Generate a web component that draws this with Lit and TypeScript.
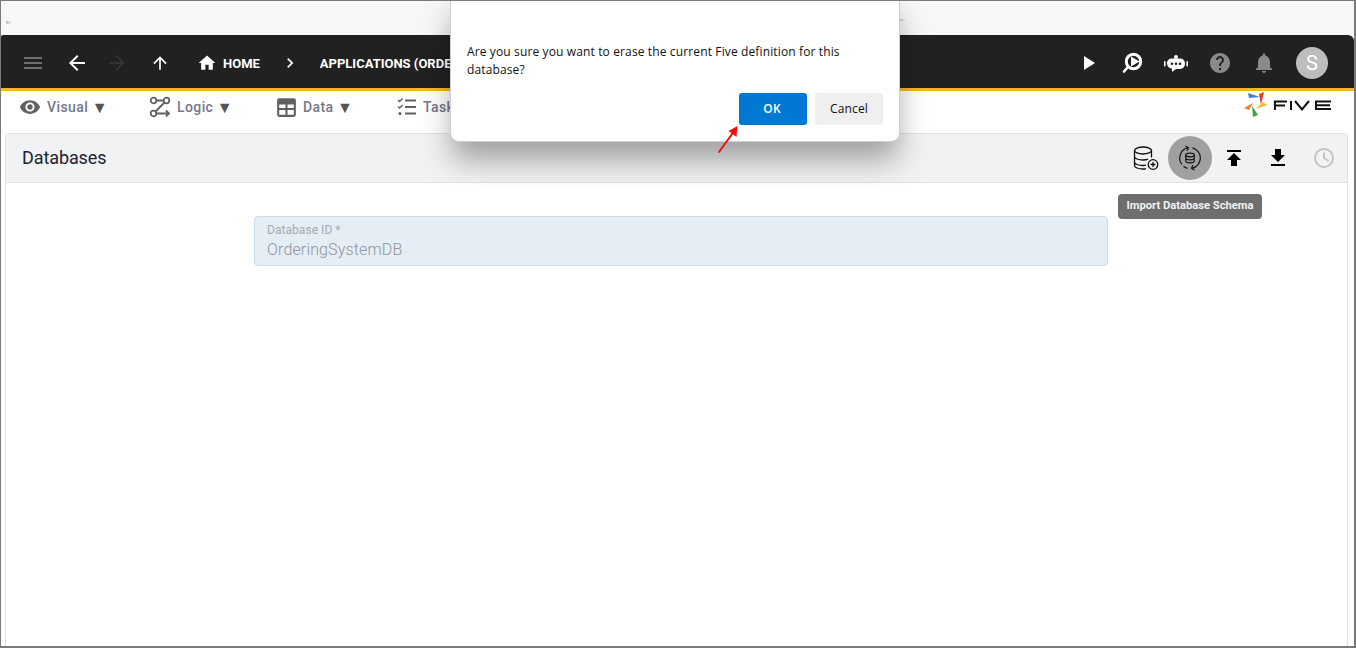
import { LitElement, html, css } from "lit";
import { customElement } from "lit/decorators.js";

const icon = (d: string, size = 24, cls = "") =>
  html`<svg class=${cls} width=${size} height=${size} viewBox="0 0 24 24" fill="currentColor"><path d=${d}></path></svg>`;

const P = {
  menu: "M3 18h18v-2H3v2zm0-5h18v-2H3v2zm0-7v2h18V6H3z",
  back: "M20 11H7.83l5.59-5.59L12 4l-8 8 8 8 1.41-1.41L7.83 13H20v-2z",
  fwd: "M12 4l-1.41 1.41L16.17 11H4v2h12.17l-5.58 5.59L12 20l8-8z",
  up: "M4 12l1.41 1.41L11 7.83V20h2V7.83l5.58 5.59L20 12l-8-8-8 8z",
  home: "M10 20v-6h4v6h5v-8h3L12 3 2 12h3v8z",
  chev: "M10 6L8.59 7.41 13.17 12l-4.58 4.59L10 18l6-6z",
  play: "M8 5v14l11-7z",
  help: "M12 2C6.48 2 2 6.48 2 12s4.48 10 10 10 10-4.48 10-10S17.52 2 12 2zm1 17h-2v-2h2v2zm2.07-7.75l-.9.92C13.45 12.9 13 13.5 13 15h-2v-.5c0-1.1.45-2.1 1.17-2.83l1.24-1.26c.37-.36.59-.86.59-1.41 0-1.1-.9-2-2-2s-2 .9-2 2H8c0-2.21 1.79-4 4-4s4 1.79 4 4c0 .88-.36 1.68-.93 2.25z",
  bell: "M12 22c1.1 0 2-.9 2-2h-4c0 1.1.9 2 2 2zm6-6v-5c0-3.07-1.63-5.64-4.5-6.32V4c0-.83-.67-1.5-1.5-1.5s-1.5.67-1.5 1.5v.68C7.64 5.36 6 7.92 6 11v5l-2 2v1h16v-1l-2-2z",
  eye: "M12 4.5C7 4.5 2.73 7.61 1 12c1.73 4.39 6 7.5 11 7.5s9.27-3.11 11-7.5c-1.73-4.39-6-7.5-11-7.5zM12 17c-2.76 0-5-2.24-5-5s2.24-5 5-5 5 2.24 5 5-2.24 5-5 5zm0-8c-1.66 0-3 1.34-3 3s1.34 3 3 3 3-1.34 3-3-1.34-3-3-3z",
  table: "M5 3h14a2 2 0 0 1 2 2v14a2 2 0 0 1-2 2H5a2 2 0 0 1-2-2V5a2 2 0 0 1 2-2zm0 6v3.5h6V9H5zm8 0v3.5h6V9h-6zm-8 5.5V19h6v-4.5H5zm8 0V19h6v-4.5h-6z",
  upload: "M5 4v2h14V4H5zm0 10h4v6h6v-6h4l-7-7-7 7z",
  download: "M19 9h-4V3H9v6H5l7 7 7-7zM5 18v2h14v-2H5z",
};

@customElement("app-root")
export class AppRoot extends LitElement {
  static styles = css`
    :host {
      display: flex;
      flex-direction: column;
      position: relative;
      box-sizing: border-box;
      height: 648px;
      border: 1px solid #7a7a7a;
      border-width: 1px 2px 2px 1px;
      background: #fff;
      font-family: Roboto, sans-serif;
      overflow: hidden;
    }
    .strip {
      height: 34px;
      flex: none;
      background: #f7f7f7;
      position: relative;
    }
    .speck {
      position: absolute;
      left: 5px;
      top: 20px;
      width: 5px;
      height: 3px;
      background: linear-gradient(90deg, #bbb, #eee);
    }
    .speck.r {
      left: 898px;
      top: 18px;
      width: 6px;
      height: 2px;
    }
    .bar {
      height: 53px;
      flex: none;
      box-sizing: content-box;
      background: #212121;
      border-bottom: 3px solid #f9b522;
      border-radius: 2px 6px 0 0;
      display: flex;
      align-items: center;
      color: #fff;
      padding: 0 0 0 20px;
    }
    .bar > * {
      position: relative;
      top: 1.5px;
    }
    .bar svg {
      display: block;
      flex: none;
    }
    .menu {
      color: #6f6f6f;
    }
    .ml-back {
      margin-left: 20px;
    }
    .ml-fwd {
      margin-left: 16px;
      color: #333;
    }
    .ml-up {
      margin-left: 21px;
    }
    .ml-home {
      margin-left: 27px;
    }
    .crumb {
      font-size: 13px;
      font-weight: 700;
      white-space: nowrap;
    }
    .home {
      margin-left: 6px;
    }
    .ml-chev {
      margin-left: 20px;
    }
    .apps {
      margin-left: 20px;
      width: 130px;
      overflow: hidden;
      flex: none;
    }
    .spacer {
      flex: 1;
    }
    .right {
      display: flex;
      align-items: center;
      gap: 20px;
      margin-right: 26px;
    }
    .dim {
      color: #8a8a8a;
    }
    .avatar {
      width: 32px;
      height: 32px;
      border-radius: 50%;
      background: #bdbdbd;
      color: #fff;
      display: flex;
      align-items: center;
      justify-content: center;
      font-size: 20px;
    }
    .tabs {
      height: 42px;
      flex: none;
      display: flex;
      align-items: flex-start;
      position: relative;
      padding-left: 18px;
      color: #616161;
    }
    .tab {
      display: flex;
      align-items: center;
      height: 32px;
      font-size: 14px;
      letter-spacing: 0.4px;
      font-weight: 500;
      flex: none;
      white-space: nowrap;
      overflow: hidden;
    }
    .tab svg {
      margin-right: 6px;
      flex: none;
    }
    .tab span {
      color: #74788a;
    }
    .tab b {
      font-weight: 400;
      font-size: 16px;
      color: #555;
      margin-left: 3.5px;
    }
    .t1 {
      width: 130px;
    }
    .t2 {
      width: 125px;
    }
    .t3 {
      width: 122px;
    }
    .t3 svg {
      margin-right: 4px;
    }
    .t4 {
      width: 54px;
    }
    .t4 svg {
      margin-right: 5px;
    }
    .logo {
      position: absolute;
      left: 1243px;
      top: 1px;
    }
    .panel {
      margin: 0 6px 0 4px;
      flex: 1;
      border: 1px solid #e2e3e5;
      border-bottom: none;
      border-radius: 4px 4px 0 0;
    }
    .phead {
      height: 48px;
      background: #f1f2f4;
      border-bottom: 1px solid #e0e1e3;
      display: flex;
      align-items: center;
      padding: 0 1px 0 16px;
      border-radius: 4px 4px 0 0;
    }
    .title {
      font-size: 18px;
      font-weight: 400;
      letter-spacing: -0.1px;
      color: #1c2433;
      flex: 1;
      margin-top: -2px;
    }
    .actions {
      display: flex;
      align-items: center;
    }
    .act {
      width: 44px;
      height: 44px;
      display: flex;
      align-items: center;
      justify-content: center;
      color: #000;
      border-radius: 50%;
    }
    .act.on {
      background: #a0a0a0;
    }
    .act.off {
      color: #c4c4c4;
      margin-left: 2px;
    }
    .form {
      padding: 33px 0 0 248px;
    }
    .field {
      box-sizing: border-box;
      width: 854px;
      height: 50px;
      background: #e5edf5;
      border: 1px solid #c9dcec;
      border-radius: 4px;
      padding: 6px 12px 0;
    }
    .label {
      font-size: 12px;
      line-height: 15px;
      letter-spacing: 0.05px;
      color: #a5abb3;
    }
    .value {
      font-size: 16px;
      line-height: 24px;
      font-weight: 300;
      letter-spacing: 0.15px;
      color: #8f959d;
    }
    .tip {
      position: absolute;
      left: 1117px;
      top: 193px;
      width: 144px;
      height: 25px;
      box-sizing: border-box;
      padding-bottom: 2px;
      background: #6e6e6e;
      border-radius: 4px;
      color: #f2f2f2;
      font-size: 11.2px;
      font-weight: 700;
      display: flex;
      align-items: center;
      justify-content: center;
      white-space: nowrap;
    }
    .dialog {
      position: absolute;
      left: 449px;
      top: -8px;
      width: 450px;
      height: 149px;
      box-sizing: border-box;
      background: #fff;
      border: 1px solid #cfcfcf;
      border-radius: 9px;
      box-shadow: 0 20px 30px -2px rgba(0, 0, 0, 0.34);
      padding: 49px 16px 0;
      font-family: "Open Sans", sans-serif;
      font-size: 12px;
      letter-spacing: 0.13px;
      line-height: 18px;
      color: #111;
      display: flex;
      flex-direction: column;
    }
    .msg {
      width: 400px;
    }
    .btns {
      display: flex;
      justify-content: flex-end;
      gap: 8px;
      margin-top: 14px;
    }
    .btn {
      width: 68px;
      height: 32px;
      border-radius: 3px;
      display: flex;
      align-items: center;
      justify-content: center;
      background: #efefef;
      color: #111;
    }
    .btn.ok {
      background: #0078d4;
      color: #fff;
      font-weight: 600;
      padding-right: 2px;
      box-sizing: border-box;
    }
    .arrow {
      position: absolute;
      left: 714px;
      top: 121px;
    }
  `;

  render() {
    return html`
      <div class="strip"><i class="speck"></i><i class="speck r"></i></div>
      <div class="bar">
        ${icon(P.menu, 24, "menu")}
        ${icon(P.back, 24, "ml-back")}
        ${icon(P.fwd, 24, "ml-fwd")}
        ${icon(P.up, 20, "ml-up")}
        ${icon(P.home, 20, "ml-home")}
        <span class="crumb home">HOME</span>
        ${icon(P.chev, 20, "ml-chev")}
        <span class="crumb apps">APPLICATIONS (ORDERING SYSTEM)</span>
        <span class="spacer"></span>
        <div class="right">
          ${icon(P.play, 24)}
          <svg width="24" height="24" viewBox="0 0 24 24" fill="none">
            <circle cx="13.5" cy="10.5" r="7.2" stroke="#fff" stroke-width="3"></circle>
            <path d="M11 5.5L19.5 10.5 11 15.5z" fill="#fff"></path>
            <path d="M8 16L4 20.5" stroke="#fff" stroke-width="2.6" stroke-linecap="round"></path>
          </svg>
          <svg width="24" height="24" viewBox="0 0 24 24" fill="#fff">
            <circle cx="12" cy="6" r="2"></circle>
            <path d="M8 7.500h8c3.200 0 5 2 5 5s-2 5.500-5 5.500h-4l-4 3v-3.200c-3-.6-5-2.700-5-5.300 0-3 2-5 5-5z"></path>
            <rect x="0" y="10" width="1.600" height="5.500" rx="0.800"></rect>
            <rect x="22.400" y="10" width="1.600" height="5.500" rx="0.800"></rect>
            <circle cx="8" cy="12.800" r="1.300" fill="#212121"></circle>
            <circle cx="12" cy="12.800" r="1.300" fill="#212121"></circle>
            <circle cx="16" cy="12.800" r="1.300" fill="#212121"></circle>
          </svg>
          ${icon(P.help, 24, "dim")}
          ${icon(P.bell, 24, "dim")}
          <div class="avatar">S</div>
        </div>
      </div>
      <div class="tabs">
        <div class="tab t1">${icon(P.eye, 22)}<span>Visual</span><b>▼</b></div>
        <div class="tab t2">
          <svg width="22" height="22" viewBox="0 0 22 22" fill="none" stroke="currentColor" stroke-width="1.8">
            <circle cx="4.500" cy="4.500" r="2.800"></circle>
            <circle cx="17.500" cy="4.500" r="2.800"></circle>
            <circle cx="4.500" cy="17.500" r="2.800"></circle>
            <path d="M7.500 4.500h7M15.500 6.500L6.500 15.500M7.500 17.500h12M17 14.500l3 3-3 3"></path>
          </svg>
          <span>Logic</span><b>▼</b>
        </div>
        <div class="tab t3">${icon(P.table, 25)}<span>Data</span><b>▼</b></div>
        <div class="tab t4">
          <svg width="22" height="22" viewBox="0 0 22 22" fill="none" stroke="currentColor" stroke-width="2">
            <path d="M9 4.500h11M9 11h11M9 17.500h11"></path>
            <path d="M2 4l1.600 1.600L6.600 2.600M2 10.500l1.600 1.600 3-3" stroke-width="1.400"></path>
            <circle cx="4" cy="17.500" r="1.500" fill="currentColor" stroke="none"></circle>
          </svg>
          <span>Tasks</span><b>▼</b>
        </div>
        <svg class="logo" width="92" height="26" viewBox="0 0 92 26">
          <path d="M4 1l12 4-11 1z" fill="#3f7fdc"></path>
          <path d="M15 2l5-2-3 13z" fill="#e53935"></path>
          <path d="M23 13l-11 4 7-7z" fill="#f9b522"></path>
          <path d="M14 23l-5 2-1-11z" fill="#43a047"></path>
          <path d="M0 16l9-5-4 7z" fill="#f57c2a"></path>
          <g fill="none" stroke="#111" stroke-width="2">
            <path d="M30 9.500h13M30 13.500h11M30.900 9v9M47 9v9M51 9l7 8.500 7-8.500M87 9.500H72v7.500h15M72 13.300h14"></path>
          </g>
        </svg>
      </div>
      <div class="panel">
        <div class="phead">
          <div class="title">Databases</div>
          <div class="actions">
            <div class="act">
              <svg width="28" height="28" viewBox="0 0 28 28" fill="none" stroke="#111" stroke-width="1.300">
                <ellipse cx="11" cy="6.500" rx="8.500" ry="3.500"></ellipse>
                <path d="M2.500 6.500v15c0 2 3.800 3.500 8.500 3.500 1 0 2-.1 3-.2M19.500 6.500v7M2.500 12.500c0 2 3.800 3.500 8.500 3.500 2 0 4-.3 5-.8M2.500 18c0 2 3.800 3.500 8.500 3.500.9 0 1.800 0 3-.3"></path>
                <circle cx="21" cy="20.500" r="4.800"></circle>
                <path d="M21 18v5M18.500 20.500h5"></path>
              </svg>
            </div>
            <div class="act on">
              <svg width="26" height="26" viewBox="0 0 26 26" fill="none" stroke="#111" stroke-width="1.200">
                <ellipse cx="13" cy="10" rx="4.200" ry="1.800"></ellipse>
                <path d="M8.800 10v6c0 1 1.900 1.800 4.200 1.800s4.200-.8 4.200-1.800V10M8.800 13c0 1 1.900 1.800 4.200 1.800s4.200-.8 4.200-1.800"></path>
                <path d="M5 19.500A10.500 10.500 0 0 1 11 2.700M15.500 2.800A10.500 10.500 0 0 1 21.500 7M21 6.500A10.500 10.500 0 0 1 15 23.300M10.500 23.300A10.500 10.500 0 0 1 6.500 21.300"></path>
                <path d="M8.500 1l3 1.700-1.500 3M17.500 25l-3-1.700 1.500-3"></path>
              </svg>
            </div>
            <div class="act">${icon(P.upload, 24)}</div>
            <div class="act">${icon(P.download, 24)}</div>
            <div class="act off">
              <svg width="24" height="24" viewBox="0 0 24 24" fill="none" stroke="currentColor" stroke-width="2">
                <circle cx="12" cy="12" r="9"></circle>
                <path d="M12 6.500V12l4.500 3"></path>
              </svg>
            </div>
          </div>
        </div>
        <div class="form">
          <div class="field">
            <div class="label">Database ID *</div>
            <div class="value">OrderingSystemDB</div>
          </div>
        </div>
      </div>
      <div class="tip">Import Database Schema</div>
      <div class="dialog">
        <div class="msg">Are you sure you want to erase the current Five definition for this database?</div>
        <div class="btns">
          <div class="btn ok">OK</div>
          <div class="btn">Cancel</div>
        </div>
      </div>
      <svg class="arrow" width="28" height="36" viewBox="0 0 28 36">
        <path d="M4 30L20 8" stroke="#f01010" stroke-width="2" stroke-linecap="round"></path>
        <path d="M22.500 4l-1 11-8-6z" fill="#f01010"></path>
      </svg>
    `;
  }
}
